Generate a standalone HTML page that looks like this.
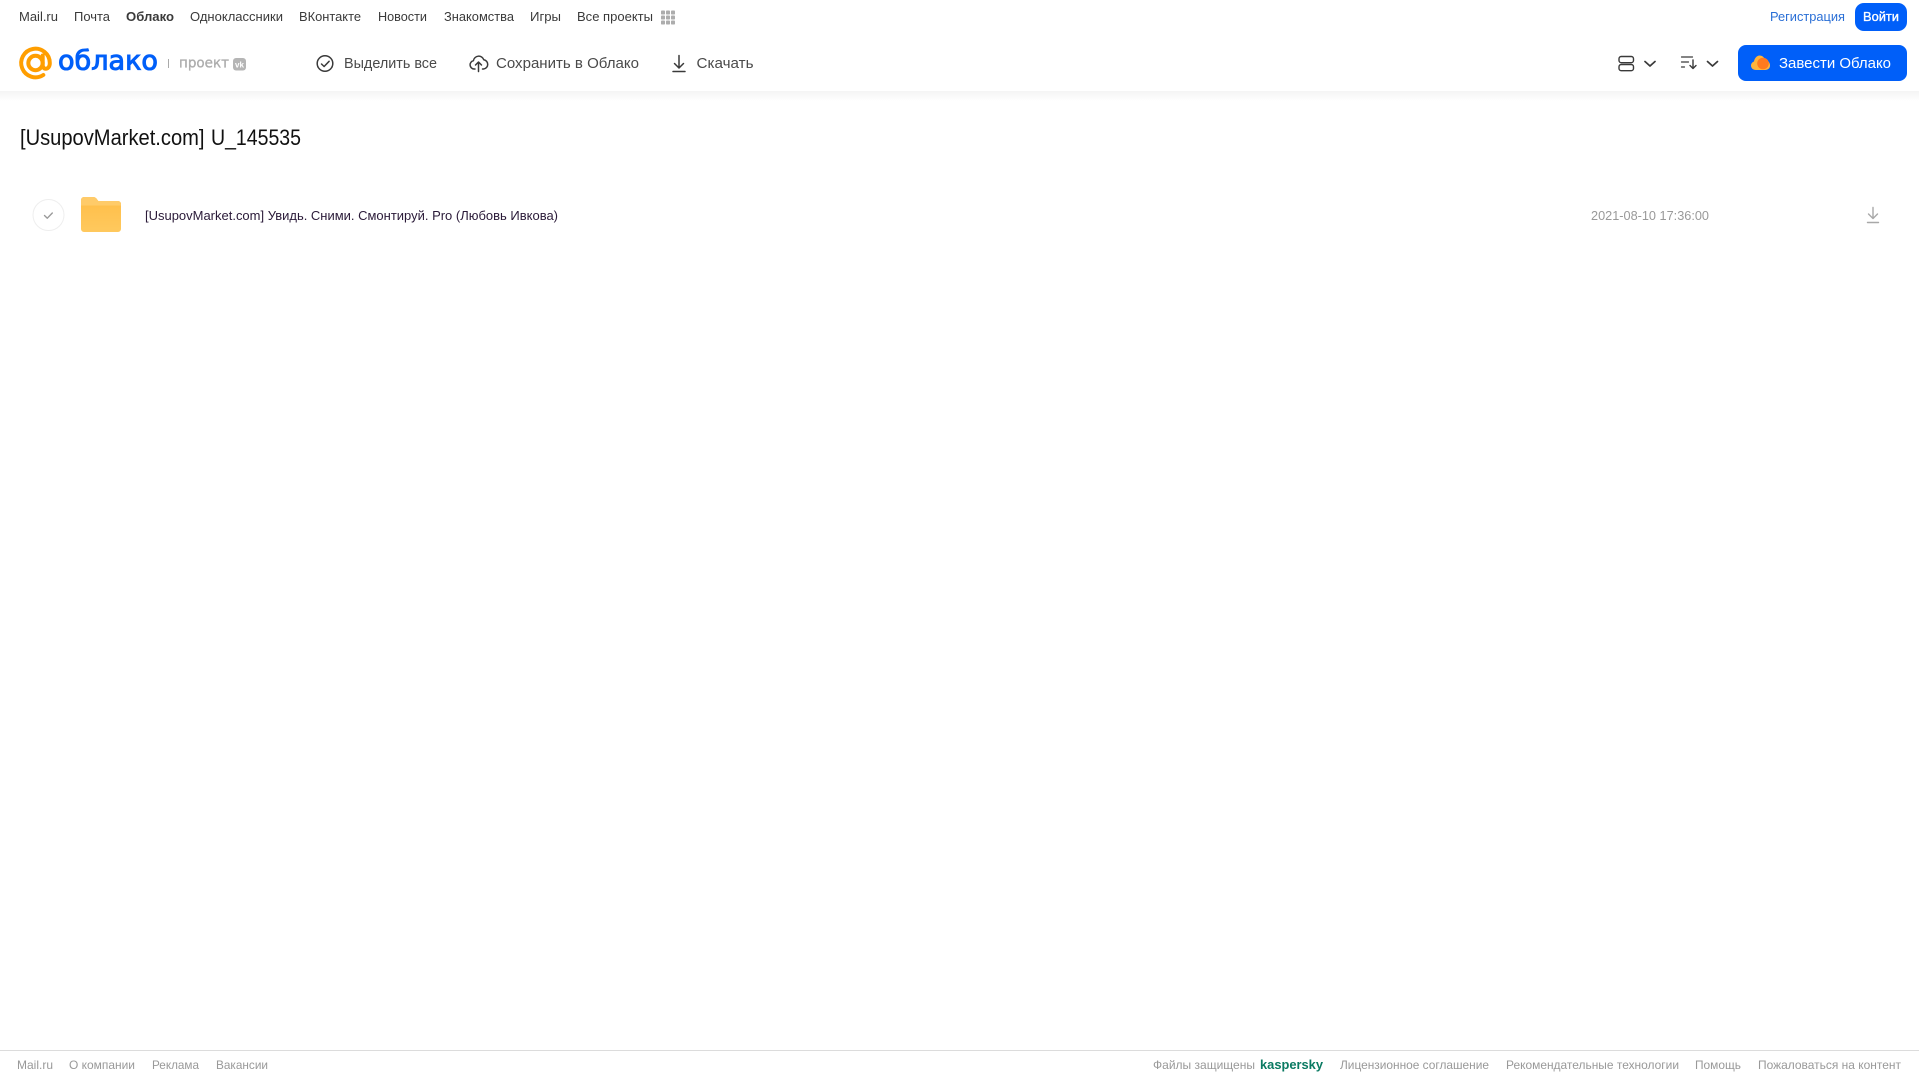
<!DOCTYPE html>
<html lang="ru">
<head>
<meta charset="utf-8">
<title>Облако</title>
<style>
html,body{margin:0;padding:0;background:#fff;width:1919px;height:1079px;overflow:hidden}
svg{display:block;position:absolute;left:0;top:0}
text{font-family:"Liberation Sans","DejaVu Sans",sans-serif}
.n{font-size:13px;fill:#3a3a3a}
.a{font-size:15px;fill:#4a4a4a}
.f{font-size:12px;fill:#999}
</style>
</head>
<body>
<svg width="1919" height="1079" viewBox="0 0 1919 1079" xmlns="http://www.w3.org/2000/svg">
<defs>
<linearGradient id="sh" x1="0" y1="0" x2="0" y2="1"><stop offset="0" stop-color="#f4f4f4"/><stop offset="1" stop-color="#fff"/></linearGradient>
<linearGradient id="fo" x1="0" y1="0" x2="0" y2="1"><stop offset="0" stop-color="#ffbd47"/><stop offset="1" stop-color="#ffc95e"/></linearGradient>
</defs>
<rect x="0" y="91" width="1919" height="10" fill="url(#sh)"/>

<!-- top nav -->
<text class="n" x="19" y="21" textLength="39" lengthAdjust="spacingAndGlyphs">Mail.ru</text>
<text class="n" x="74" y="21" textLength="36" lengthAdjust="spacingAndGlyphs">Почта</text>
<text class="n" x="126" y="21" textLength="48" lengthAdjust="spacingAndGlyphs" font-weight="700">Облако</text>
<text class="n" x="190" y="21" textLength="93" lengthAdjust="spacingAndGlyphs">Одноклассники</text>
<text class="n" x="299" y="21" textLength="62" lengthAdjust="spacingAndGlyphs">ВКонтакте</text>
<text class="n" x="378" y="21" textLength="49" lengthAdjust="spacingAndGlyphs">Новости</text>
<text class="n" x="444" y="21" textLength="70" lengthAdjust="spacingAndGlyphs">Знакомства</text>
<text class="n" x="530" y="21" textLength="31" lengthAdjust="spacingAndGlyphs">Игры</text>
<text class="n" x="577" y="21" textLength="76" lengthAdjust="spacingAndGlyphs">Все проекты</text>
<g fill="#adadad">
<rect x="661" y="10.500" width="4" height="4" rx=".8"/><rect x="666" y="10.500" width="4" height="4" rx=".8"/><rect x="671" y="10.500" width="4" height="4" rx=".8"/>
<rect x="661" y="15.500" width="4" height="4" rx=".8"/><rect x="666" y="15.500" width="4" height="4" rx=".8"/><rect x="671" y="15.500" width="4" height="4" rx=".8"/>
<rect x="661" y="20.500" width="4" height="4" rx=".8"/><rect x="666" y="20.500" width="4" height="4" rx=".8"/><rect x="671" y="20.500" width="4" height="4" rx=".8"/>
</g>

<text x="1770" y="21" font-size="13" fill="#2a6fd6" textLength="75" lengthAdjust="spacingAndGlyphs">Регистрация</text>
<rect x="1855" y="3" width="52" height="28" rx="9" fill="#005ff9"/>
<text x="1863" y="21" font-size="13" fill="#fff" stroke="#fff" stroke-width=".35" textLength="36" lengthAdjust="spacingAndGlyphs">Войти</text>

<!-- logo -->
<g fill="none" stroke="#ff9e00" stroke-width="4">
<circle cx="35.500" cy="63" r="7.200"/>
<path d="M42.700 55.500v9.500c0 5.500 7.100 5 7.100-2a14.300 14.300 0 1 0-6.500 12" stroke-linecap="round"/>
</g>
<text x="58" y="69.500" font-size="27" fill="#005ff9" textLength="100" lengthAdjust="spacingAndGlyphs" style="font-family:'DejaVu Sans',sans-serif" stroke="#005ff9" stroke-width="1">облако</text>
<rect x="168" y="59" width="1" height="9" fill="#aaa"/>
<text x="179" y="67.500" font-size="14.500" fill="#adadad" stroke="#adadad" stroke-width=".35" textLength="50" lengthAdjust="spacingAndGlyphs" style="font-family:'DejaVu Sans',sans-serif">проект</text>
<rect x="233" y="58" width="13" height="12.500" rx="3" fill="#b5b5b5"/>
<text x="235" y="67.500" font-size="8" font-weight="700" fill="#fff" textLength="9" lengthAdjust="spacingAndGlyphs">vk</text>

<!-- actions -->
<g fill="none" stroke="#3a3a3a" stroke-width="1.500" stroke-linecap="round" stroke-linejoin="round">
<circle cx="325" cy="63.500" r="7.800"/>
<path d="M321.500 64l2.600 2.500 5-5.200"/>
<path d="M475 69h-1a4.200 4.200 0 0 1-.6-8.300 5.400 5.400 0 0 1 10.400-1 4.700 4.700 0 0 1-.2 9.300h-1.100"/>
<path d="M478.500 71.500v-9M475.500 65l3-3 3 3"/>
<path d="M679 55.500v12.500M674.500 63.500l4.500 4.500 4.500-4.500M673 71.500h12"/>
</g>
<text class="a" x="344" y="68" textLength="93" lengthAdjust="spacingAndGlyphs">Выделить все</text>
<text class="a" x="496" y="68" textLength="143" lengthAdjust="spacingAndGlyphs">Сохранить в Облако</text>
<text class="a" x="696.500" y="68" textLength="57" lengthAdjust="spacingAndGlyphs">Скачать</text>

<!-- view / sort -->
<g fill="none" stroke="#3a3a3a" stroke-width="1.400" stroke-linecap="round" stroke-linejoin="round">
<rect x="1619" y="56.500" width="14.500" height="6.200" rx="2.200"/>
<rect x="1619" y="64.500" width="14.500" height="6.200" rx="2.200"/>
<path d="M1645 61.500l5 4.500 5-4.500" stroke-width="1.700"/>
<path d="M1681.500 57h11M1681.500 62h7M1681.500 67h3" stroke-width="1.200"/>
<path d="M1693 60v8.500M1690 65.500l3 3 3-3"/>
<path d="M1707.500 61.500l5 4.500 5-4.500" stroke-width="1.700"/>
</g>

<!-- CTA -->
<rect x="1738" y="45" width="169" height="36" rx="8" fill="#005ff9"/>
<g>
<path d="M1756 70c-3 0-5-2-5-4.500 0-2 1.500-3.500 3-4 .5-3.500 3-6 5.500-6 3 0 5 2 5.500 4.500 3 0 5 2.500 5 5.500 0 2.700-2 4.500-5 4.500z" fill="#ffb43c"/>
<circle cx="1763" cy="63.500" r="5.800" fill="#ff7a1f"/>
</g>
<text x="1779" y="68" font-size="15" fill="#fff" textLength="112" lengthAdjust="spacingAndGlyphs">Завести Облако</text>

<!-- title -->
<text x="20" y="145" font-size="22" fill="#111" textLength="184.500" lengthAdjust="spacingAndGlyphs">[UsupovMarket.com]</text>
<text x="211" y="145" font-size="22" fill="#111" textLength="90" lengthAdjust="spacingAndGlyphs">U_145535</text>

<!-- row -->
<circle cx="48.500" cy="215" r="15.500" fill="#fff" stroke="#eeeeee" stroke-width="1"/>
<path d="M44.500 215.500l2.800 2.700 5-5.200" fill="none" stroke="#9a9a9a" stroke-width="1.400" stroke-linecap="round" stroke-linejoin="round"/>
<path d="M81 200a3 3 0 0 1 3-3h9c2 0 3 .8 4 2.200l1.300 1.800H118a3 3 0 0 1 3 3v25a3 3 0 0 1-3 3H84a3 3 0 0 1-3-3z" fill="url(#fo)"/>
<path d="M81 200a3 3 0 0 1 3-3h9c2 0 3 .8 4 2.200l1.300 1.800H118a3 3 0 0 1 3 3v1.500H81z" fill="#ffcb69"/>
<text x="145" y="220" font-size="13" fill="#2a1a38" textLength="413" lengthAdjust="spacingAndGlyphs">[UsupovMarket.com] Увидь. Сними. Смонтируй. Pro (Любовь Ивкова)</text>
<text x="1591" y="220" font-size="12.500" fill="#999" textLength="118" lengthAdjust="spacingAndGlyphs">2021-08-10 17:36:00</text>
<g fill="none" stroke="#a8a8a8" stroke-width="1.400" stroke-linecap="round" stroke-linejoin="round">
<path d="M1873 207.500v11M1868.500 214l4.500 4.500 4.500-4.500"/>
<path d="M1867.500 222.500h11"/>
</g>

<!-- footer -->
<rect x="0" y="1050" width="1919" height="1" fill="#dcdcdc"/>
<text class="f" x="17" y="1069" textLength="36" lengthAdjust="spacingAndGlyphs">Mail.ru</text>
<text class="f" x="69" y="1069" textLength="66" lengthAdjust="spacingAndGlyphs">О компании</text>
<text class="f" x="152" y="1069" textLength="47" lengthAdjust="spacingAndGlyphs">Реклама</text>
<text class="f" x="216" y="1069" textLength="52" lengthAdjust="spacingAndGlyphs">Вакансии</text>
<text class="f" x="1153" y="1069" textLength="102" lengthAdjust="spacingAndGlyphs">Файлы защищены</text>
<text x="1260" y="1069" font-size="13" font-weight="700" fill="#0a7a62" textLength="63" lengthAdjust="spacingAndGlyphs">kaspersky</text>
<text class="f" x="1340" y="1069" textLength="149" lengthAdjust="spacingAndGlyphs">Лицензионное соглашение</text>
<text class="f" x="1506" y="1069" textLength="173" lengthAdjust="spacingAndGlyphs">Рекомендательные технологии</text>
<text class="f" x="1695" y="1069" textLength="46" lengthAdjust="spacingAndGlyphs">Помощь</text>
<text class="f" x="1758" y="1069" textLength="143" lengthAdjust="spacingAndGlyphs">Пожаловаться на контент</text>
</svg>
</body>
</html>
